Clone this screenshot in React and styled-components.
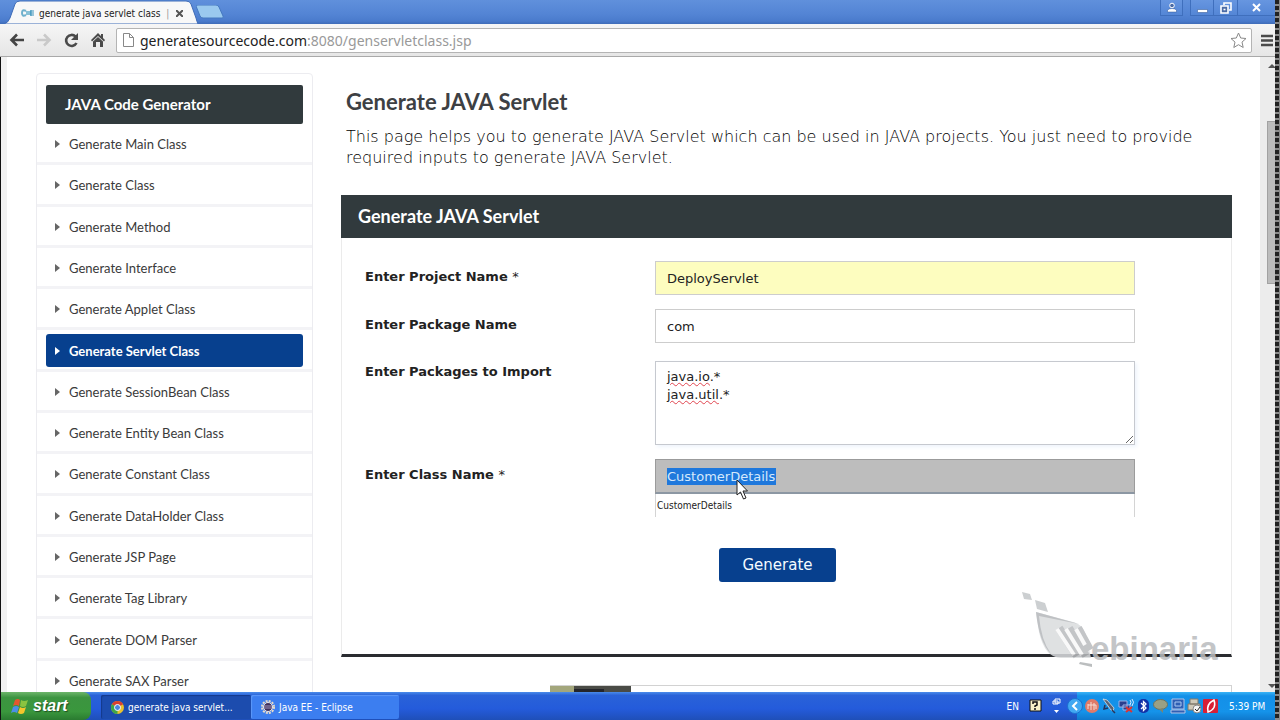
import React from "react";
import styled, { createGlobalStyle } from "styled-components";

const verdana = `"DejaVu Sans", sans-serif`;
const lato = `Lato, sans-serif`;
const tahoma = `"DejaVu Sans Condensed", "DejaVu Sans", sans-serif`;

const Global = createGlobalStyle`
  * { box-sizing: border-box; }
  body { margin: 0; background: #fff; font-family: ${verdana}; color: #333; }
  button, input, textarea { font-family: inherit; }
  h1, h2, p, ul { margin: 0; padding: 0; }
`;

const Desktop = styled.div`
  display: flex;
  flex-direction: column;
  height: 100vh;
  overflow: hidden;
  position: relative;
`;

const TitleBar = styled.header`
  flex: none;
  display: flex;
  align-items: flex-end;
  height: 24px;
  padding-left: 4px;
  background: linear-gradient(#6090dc, #5384d4 60%, #4a7bcc 88%, #3f6cb8);
`;

const Tab = styled.div`
  position: relative;
  display: flex;
  align-items: center;
  width: 194px;
  height: 24px;
  padding: 2px 0 0 17px;
  font: 10px ${tahoma};
  color: #222;
  > svg.shape { position: absolute; left: 0; top: 0; }
  > *:not(.shape) { position: relative; }
`;

const TabTitle = styled.span`
  flex: 1;
  margin-left: 4px;
  white-space: nowrap;
  i { margin-left: 3px; font-style: normal; color: #999; }
`;

const TabClose = styled.button`
  width: 10px;
  height: 12px;
  margin-right: 12px;
  padding: 0;
  border: 0;
  background: none;
  display: flex;
  align-items: center;
`;

const NewTab = styled.button`
  align-self: flex-start;
  margin: 5px 0 0 -2px;
  padding: 0;
  border: 0;
  background: none;
  height: 14px;
  svg { display: block; }
`;

const WindowButtons = styled.div`
  align-self: flex-start;
  display: flex;
  margin: 0 4px 0 auto;
`;

const WindowButton = styled.button`
  width: ${(p) => p.$w}px;
  height: 16px;
  margin-right: ${(p) => p.$gap || 0}px;
  padding: 0;
  border: 1px solid #3f6fbd;
  border-width: 0 1px 1px ${(p) => (p.$first ? 1 : 0)}px;
  background: linear-gradient(#6796e0, #5486d6);
  display: flex;
  align-items: center;
  justify-content: center;
`;

const Toolbar = styled.nav`
  flex: none;
  display: flex;
  align-items: center;
  height: 33px;
  padding: 0 7px 0 8px;
  background: linear-gradient(#f6f6f6, #e6e6e6);
  border-bottom: 1px solid #a9a9a9;
`;

const ToolButton = styled.button`
  width: 18px;
  height: 20px;
  margin-right: 9px;
  padding: 0;
  border: 0;
  background: none;
  display: grid;
  place-items: center;
`;

const AddressBar = styled.div`
  flex: 1;
  display: flex;
  align-items: center;
  height: 25px;
  padding: 0 4px 0 6px;
  margin-right: 9px;
  border: 1px solid #b4b4b4;
  border-radius: 2px;
  background: #fff;
`;

const Address = styled.span`
  flex: 1;
  margin-left: 6px;
  font: 14px "Noto Sans", sans-serif;
  color: #999;
  b { font-weight: 400; color: #222; }
`;

const Viewport = styled.div`
  flex: 1;
  min-height: 0;
  display: flex;
  border-left: 1px solid #111;
`;

const Page = styled.div`
  flex: 1;
  display: flex;
  align-items: flex-start;
  overflow: hidden;
  padding: 16px 28px 0 29px;
  border-left: 6px solid #f1f1f1;
`;

const Scrollbar = styled.div`
  flex: none;
  display: flex;
  flex-direction: column;
  align-items: flex-end;
  width: 20px;
  padding: 7px 4px 4px 0;
  background: #ececec;
  svg { display: block; }
`;

const Thumb = styled.div`
  width: 9px;
  height: 163px;
  margin: 53px 0 auto;
  background: #bcbcbc;
  border: 1px solid #a2a2a2;
`;

const FilmEdge = styled.div`
  position: absolute;
  top: 0;
  right: 0;
  bottom: 0;
  width: 5px;
  border-right: 1px solid #8a8a8a;
  background: repeating-linear-gradient(#222 0 4px, #8c8c8c 4px 6px);
`;

const Sidebar = styled.aside`
  flex: none;
  width: 277px;
  height: 680px;
  padding-top: 11px;
  border: 1px solid #ececf0;
  border-radius: 4px;
  background: #fff;
`;

const SidebarTitle = styled.h2`
  height: 39px;
  margin: 0 9px;
  padding-left: 19px;
  border-radius: 2px;
  background: #313a3d;
  color: #fff;
  font: 700 15px/39px ${lato};
`;

const Menu = styled.ul`
  list-style: none;
  display: grid;
  grid-auto-rows: 1fr;
  height: 578px;
`;

const MenuItem = styled.li`
  display: flex;
  align-items: center;
  padding: 0 9px;
  border-bottom: 3px solid #f3f3f6;
`;

const MenuLink = styled.a`
  flex: 1;
  display: flex;
  align-items: center;
  gap: 9px;
  height: 33px;
  padding-left: 9px;
  margin-top: 2px;
  border-radius: 3px;
  background: ${(p) => (p.$active ? "#07408e" : "transparent")};
  color: ${(p) => (p.$active ? "#fff" : "#3a3a3a")};
  font: ${(p) => (p.$active ? 700 : 400)} 13px ${lato};
  text-decoration: none;
`;

const Main = styled.main`
  flex: 1;
  min-width: 0;
  margin-left: 28px;
`;

const Intro = styled.section`
  padding: 17px 5px 0;
  height: 122px;
`;

const PageTitle = styled.h1`
  font: 700 22px/24px ${lato};
  color: #3d4043;
  margin-bottom: 12px;
`;

const Lead = styled.p`
  font-size: 16px;
  font-weight: 200;
  line-height: 21px;
  color: #000;
`;

const Panel = styled.form`
  height: 462px;
  border: 1px solid #ebebeb;
  border-top: 0;
  border-bottom: 3px solid #2a2c30;
`;

const PanelTitle = styled.h2`
  height: 43px;
  margin: 0 -1px 23px;
  padding-left: 17px;
  background: #313a3d;
  color: #fff;
  font: 700 18px/43px ${lato};
`;

const Field = styled.div`
  display: grid;
  grid-template-columns: 290px 1fr;
  align-items: start;
  margin: 0 96px ${(p) => p.$gap || 0}px 23px;
`;

const Label = styled.label`
  padding-top: ${(p) => (p.$raised ? 2 : 7)}px;
  font-size: 13px;
  line-height: 17px;
  font-weight: 700;
  color: #222;
  span { font-weight: 400; }
`;

const TextInput = styled.input`
  width: 100%;
  height: 34px;
  padding: 0 11px;
  border: 1px solid #cdcdcd;
  border-radius: 0;
  background: ${(p) => p.$bg || "#fff"};
  color: #222;
  font-size: 13px;
  outline: 0;
`;

const TextArea = styled.textarea`
  display: block;
  width: 100%;
  height: 84px;
  padding: 6px 11px;
  border: 1px solid #c6c9cf;
  border-radius: 0;
  box-shadow: 2px 2px 4px #eef4fc;
  color: #222;
  font-size: 13px;
  line-height: 18px;
  outline: 0;
  resize: vertical;
`;

const Spelling = styled.div`
  position: absolute;
  left: 12px;
  top: 7px;
  font-size: 13px;
  line-height: 18px;
  color: transparent;
  pointer-events: none;
  span { text-decoration: underline wavy #e0454f 1px; }
`;

const Relative = styled.div`
  position: relative;
`;

const SelectedInput = styled.div`
  display: flex;
  align-items: center;
  height: 35px;
  padding-left: 11px;
  border: 1px solid #9b9b9b;
  border-bottom: 2px solid #8c97a3;
  background: #bdbdbd;
  input {
    width: 109px;
    height: 17px;
    padding: 0;
    border: 0;
    background: #1f78dc;
    color: #d5e8fb;
    font-size: 13px;
    outline: 0;
  }
`;

const Suggestion = styled.div`
  height: 23px;
  padding-left: 1px;
  border: 1px solid #d4d4d4;
  border-width: 0 1px;
  font: 10px/23px ${tahoma};
  color: #222;
`;

const Cursor = styled.svg`
  position: absolute;
  left: 81px;
  top: 20px;
`;

const Submit = styled.button`
  display: block;
  width: 117px;
  height: 34px;
  margin: 31px auto 0 377px;
  border: 0;
  border-radius: 3px;
  background: #07408e;
  color: #f4fbff;
  font-size: 15px;
  font-weight: 400;
`;

const NextPanel = styled.section`
  height: 80px;
  margin: 28px 0 0 209px;
  border: 1px solid #d2d2d2;
  border-left: 0;
  svg { display: block; }
`;

const Watermark = styled.svg`
  position: absolute;
  right: 55px;
  bottom: 52px;
`;

const Taskbar = styled.footer`
  flex: none;
  display: flex;
  align-items: stretch;
  height: 28px;
  border-left: 1px solid #111;
  background: linear-gradient(#4a8cea, #2a62d8 12%, #245bdb 60%, #1f4fb8);
  font: 10px ${tahoma};
  color: #fff;
`;

const StartButton = styled.button`
  display: flex;
  align-items: center;
  gap: 4px;
  width: 90px;
  padding: 0 0 0 10px;
  border: 0;
  border-radius: 0 8px 8px 0;
  background: linear-gradient(#6db56a, #3c9440 20%, #3a973d 70%, #2a7a30);
  color: #fff;
  font: italic 700 16px "Liberation Sans", sans-serif;
  text-shadow: 1px 1px 1px #1d4d20;
`;

const Task = styled.button`
  display: flex;
  align-items: center;
  gap: 4px;
  width: ${(p) => p.$w}px;
  margin: 3px 0 1px ${(p) => p.$gap || 0}px;
  padding: 0 0 0 10px;
  border: 0;
  border-radius: 2px;
  background: ${(p) => (p.$active ? "#1c4cae" : "#3c7ef0")};
  box-shadow: inset 1px 1px 1px ${(p) => (p.$active ? "#153a8c" : "#5c98f8")};
  color: #fff;
  font: inherit;
  white-space: nowrap;
`;

const Language = styled.div`
  display: flex;
  align-items: center;
  gap: 10px;
  margin-left: auto;
  padding-right: 16px;
`;

const Tray = styled.div`
  display: flex;
  align-items: center;
  gap: 1px;
  width: 203px;
  background: linear-gradient(#3ab4f6, #1390e8 14%, #1593ea 70%, #0f78cc);
  time { margin-left: 10px; white-space: nowrap; }
`;

const TrayToggle = styled.button`
  margin-left: -10px;
  padding: 0;
  border: 0;
  background: none;
  svg { display: block; }
`;

const items = [
  "Generate Main Class", "Generate Class", "Generate Method", "Generate Interface",
  "Generate Applet Class", "Generate Servlet Class", "Generate SessionBean Class",
  "Generate Entity Bean Class", "Generate Constant Class", "Generate DataHolder Class",
  "Generate JSP Page", "Generate Tag Library", "Generate DOM Parser", "Generate SAX Parser",
];

const Chevron = ({ color }) => (
  <svg width="5" height="8" viewBox="0 0 5 8"><path d="M0 0l5 4-5 4z" fill={color} /></svg>
);

function Browser() {
  return (
    <>
      <TitleBar>
        <Tab>
          <svg className="shape" width="194" height="24"><path d="M0 24Q4 23 6 18L11 4Q12 1 16 1H182Q186 1 187 4L192 18Q193 22 194 24z" fill="#f8f8f8" stroke="#3f6cb8" strokeWidth="1" /></svg>
          <svg width="14" height="8" viewBox="0 0 14 8" fill="none" strokeWidth="2"><path d="M5 2Q1 0 1 4T5 6" stroke="#6fb0cc" /><path d="M5 4h5" stroke="#88c0d6" strokeWidth="4" /><path d="M10 1v6M9 2h4M9 4h4M9 6h4" stroke="#3b93bb" strokeWidth="1" /></svg>
          <TabTitle>generate java servlet class <i>|</i></TabTitle>
          <TabClose aria-label="Close tab"><svg width="7" height="7"><path d="M0 0l7 7M7 0L0 7" stroke="#555" strokeWidth="2" /></svg></TabClose>
        </Tab>
        <NewTab aria-label="New tab"><svg width="28" height="14"><path d="M0 1Q0 0 2 0H20Q22 0 23 2L27 11Q28 13 26 13H7Q5 13 4 11z" fill="#9ac9ef" stroke="#4478c0" /></svg></NewTab>
        <WindowButtons>
          <WindowButton $w={23} $gap={7} $first aria-label="Profile"><svg width="10" height="11"><circle cx="5" cy="3.500" r="2.300" fill="#4a6ba6" stroke="#fff" /><path d="M.5 10V8Q2 6.500 5 6.500T9.500 8V10z" fill="#fff" stroke="#2f5596" strokeWidth=".5" /></svg></WindowButton>
          <WindowButton $w={24} $first aria-label="Minimize"><svg width="11" height="11"><path d="M.5 7.500h10v3H.5z" fill="#fff" stroke="#3a5f9e" strokeWidth=".6" /></svg></WindowButton>
          <WindowButton $w={24} aria-label="Restore"><svg width="12" height="12" fill="none" stroke="#fff" strokeWidth="1.600"><path d="M4 3V1h7v7H9" /><path d="M1 4h7v7H1z" fill="#4a6ba6" /><path d="M3.500 7.500h2" /></svg></WindowButton>
          <WindowButton $w={38} aria-label="Close"><svg width="9" height="9"><path d="M1 1l7 7M8 1L1 8" stroke="#fff" strokeWidth="2" /></svg></WindowButton>
        </WindowButtons>
      </TitleBar>
      <Toolbar>
        <ToolButton aria-label="Back"><svg width="16" height="14" fill="none" stroke="#444" strokeWidth="2.6"><path d="M15 7H3M8 1.5L2.500 7L8 12.500" /></svg></ToolButton>
        <ToolButton aria-label="Forward"><svg width="16" height="14" fill="none" stroke="#c9c9c9" strokeWidth="2.6"><path d="M1 7H13M8 1.500L13.500 7L8 12.500" /></svg></ToolButton>
        <ToolButton aria-label="Reload"><svg width="15" height="15"><path d="M12.500 10A5.500 5.500 0 1 1 11.500 3.500" fill="none" stroke="#4a4a4a" strokeWidth="2.600" /><path d="M14 0v7H7z" fill="#4a4a4a" /></svg></ToolButton>
        <ToolButton aria-label="Home"><svg width="14" height="14" fill="#4a4a4a"><path d="M7 0L0 7l1 1.500L7 3l6 5.500L14 7l-2-2V1h-2v2z" /><path d="M2 8.500L7 4l5 4.500V14H9V9H5v5H2z" /></svg></ToolButton>
        <AddressBar>
          <svg width="11" height="14" fill="#fff" stroke="#888"><path d="M.5.5h6l4 4v9H.5zM6.500.5v4h4" /></svg>
          <Address><b>generatesourcecode.com</b>:8080/genservletclass.jsp</Address>
          <svg width="17" height="17" viewBox="0 0 17 17"><path d="M8.500 1l2.200 5 5.300.5-4 3.600 1.200 5.400-4.700-2.800-4.700 2.800L5 10.100 1 6.500 6.300 6z" fill="#fff" stroke="#888" /></svg>
        </AddressBar>
        <svg width="12" height="13"><path d="M0 2h12M0 6.500h12M0 11h12" stroke="#4a4a4a" strokeWidth="2.500" /></svg>
      </Toolbar>
    </>
  );
}

function ServletForm() {
  return (
    <Panel onSubmit={(e) => e.preventDefault()}>
      <PanelTitle>Generate JAVA Servlet</PanelTitle>
      <Field $gap={14}>
        <Label htmlFor="project">Enter Project Name <span>*</span></Label>
        <TextInput id="project" $bg="#fdfdbf" defaultValue="DeployServlet" />
      </Field>
      <Field $gap={18}>
        <Label htmlFor="package">Enter Package Name</Label>
        <TextInput id="package" defaultValue="com" />
      </Field>
      <Field $gap={14}>
        <Label htmlFor="imports" $raised>Enter Packages to Import</Label>
        <Relative>
          <TextArea id="imports" spellCheck={false} defaultValue={"java.io.*\njava.util.*"} />
          <Spelling aria-hidden="true"><span>java.io</span><br /><span>java.util</span></Spelling>
        </Relative>
      </Field>
      <Field>
        <Label htmlFor="classname">Enter Class Name <span>*</span></Label>
        <Relative>
          <SelectedInput><input id="classname" defaultValue="CustomerDetails" /></SelectedInput>
          <Suggestion>CustomerDetails</Suggestion>
          <Cursor width="12" height="21" viewBox="0 0 12 21"><path d="M1 1V16L4.500 13L7.500 20L10 19L7 12H11.500z" fill="#fff" stroke="#222" /></Cursor>
        </Relative>
      </Field>
      <Submit type="submit">Generate</Submit>
    </Panel>
  );
}

function WebinariaMark() {
  return (
    <Watermark width="204" height="76" viewBox="0 0 204 76" opacity=".85">
      <g fill="#c4c7c9">
        <path d="M1 0l8 2 2 6-8-1zM14 8l10 3 3 9-11-3z" />
        <path d="M15 20L52 30Q64 33 66 48L70 66H40Q24 66 18 40z" fill="#dadcde" />
        <path d="M15 20L58 32L18 24Q20 48 30 62Q18 50 15 20z" fill="#b4b7ba" />
      </g>
      <g fill="none" stroke="#b9bbbe" strokeWidth="8"><path d="M38 36l18 28M48 36l17 28M57 36l12 22" /></g>
      <g fill="none" stroke="#f8f8f8" strokeWidth="4"><path d="M36 37l17 26M45 37l16 26M55 37l9 16" /></g>
      <path d="M59 70l12 2v3l-13-3z" fill="#b0b3b5" />
      <text x="70" y="68" fill="#b9bbbe" fontFamily="'Liberation Sans Narrow', 'Liberation Sans', sans-serif" fontWeight="700" fontSize="33">ebinaria</text>
    </Watermark>
  );
}

function WindowsTaskbar() {
  return (
    <Taskbar>
      <StartButton>
        <svg width="18" height="17" viewBox="0 0 18 17"><path d="M4 2Q7 0 9 2L8 8Q5 6 2 8z" fill="#e4572e" /><path d="M10 2Q13 4 17 2L15 8Q12 10 9 8z" fill="#8ac440" /><path d="M2 9Q5 7 8 9L6 15Q3 13 0 15z" fill="#4b8fe8" /><path d="M9 9Q12 11 15 9L13 15Q10 17 7 15z" fill="#f5c52c" /></svg>
        start
      </StartButton>
      <Task $w={150} $gap={10} $active>
        <svg width="13" height="13" viewBox="0 0 13 13"><circle cx="6.500" cy="6.500" r="6.500" fill="#e8c22e" /><path d="M6.500 6.500L.9 3.200A6.500 6.500 0 0 1 12.100 3.200z" fill="#d8412f" /><path d="M6.500 6.500L.9 3.200A6.500 6.500 0 0 0 6.500 13z" fill="#3fa648" /><circle cx="6.500" cy="6.500" r="3" fill="#4a86e0" stroke="#fff" /></svg>
        generate java servlet...
      </Task>
      <Task $w={148}>
        <svg width="14" height="14"><circle cx="7" cy="7" r="6" fill="none" stroke="#e8dcc8" strokeWidth="2" strokeDasharray="2 1.140" /><circle cx="7" cy="7" r="4.500" fill="#40305c" stroke="#eee" /><path d="M3 6h8M3 8h8" stroke="#c8c0e0" strokeWidth=".7" /></svg>
        Java EE - Eclipse
      </Task>
      <Language>
        <span>EN</span>
        <svg width="13" height="14"><path d="M1 1h11v11H1z" fill="#f8f2c8" stroke="#111" /><path d="M4 5V3h4v3L6 7v1M6 9v2" fill="none" stroke="#111" strokeWidth="1.500" /></svg>
        <svg width="9" height="17"><path d="M3 1h5v4H3zM1 3h5v3H1z" fill="#2a62d8" stroke="#fff" /><path d="M2 12h5l-2.500 3z" fill="#fff" /></svg>
      </Language>
      <Tray>
        <TrayToggle aria-label="Show hidden icons"><svg width="16" height="18"><circle cx="8" cy="9" r="7.500" fill="#41a8f2" stroke="#1c6fd0" /><path d="M10 5L6 9l4 4" fill="none" stroke="#fff" strokeWidth="2" /></svg></TrayToggle>
        <svg width="16" height="16"><circle cx="8" cy="8" r="7" fill="#e07a68" /><path d="M4 6v5M7 4v8M10 5v7M12 7v4M4 7h8" stroke="#f7ddd4" /></svg>
        <svg width="16" height="16"><path d="M2 1l4 1 7 8-1 3-2-1z" fill="#5b6272" stroke="#dcdfe4" strokeWidth=".8" /><path d="M4 7l-1 4 4-1M11 12l3 3" stroke="#26345a" fill="none" strokeWidth="1.500" /></svg>
        <svg width="17" height="16"><path d="M1 3h8v6H1zM5 7h7v5H5z" fill="#2b3f8e" stroke="#9fb2e6" /><path d="M12 2q2 2 0 5M14 1q3 3 0 7" stroke="#dcecff" fill="none" /><path d="M8 9l6 5M14 9l-6 5" stroke="#d33" strokeWidth="2" /></svg>
        <svg width="15" height="16"><rect x="2" y="1" width="11" height="14" rx="5" fill="#1232a8" /><path d="M5 5l5 5-2.500 2.500v-9L10 6l-5 5" fill="none" stroke="#fff" strokeWidth="1.300" /></svg>
        <svg width="17" height="16"><ellipse cx="8.500" cy="6.500" rx="7" ry="5" fill="#9aa084" stroke="#6d7460" /><path d="M7 11l4 4 0-5z" fill="#7d8470" /></svg>
        <svg width="16" height="16"><path d="M2 1h12v10H2zM1 12h14v3H1z" fill="#2f5fb4" stroke="#b0c4e8" /><path d="M5 4h6v4H5z" fill="none" stroke="#a9c8f2" /></svg>
        <svg width="15" height="16"><path d="M3 1h8v5H3zM1 6h12v6H1z" fill="#cfc9b8" stroke="#80796a" /><circle cx="10" cy="11" r="4" fill="#f4f4f4" stroke="#888" /><path d="M8 11l2 2 3-4" fill="none" stroke="#222" /></svg>
        <svg width="15" height="16"><rect x="0" y="1" width="15" height="14" rx="1" fill="#d81f35" /><path d="M11 2Q3 6 5 14Q14 11 11 2z" fill="none" stroke="#fff" strokeWidth="1.500" /></svg>
        <time>5:39 PM</time>
      </Tray>
    </Taskbar>
  );
}

export default function App() {
  return (
    <Desktop>
      <Global />
      <Browser />
      <Viewport>
        <Page>
          <Sidebar>
            <SidebarTitle>JAVA Code Generator</SidebarTitle>
            <Menu>
              {items.map((name, i) => (
                <MenuItem key={name}>
                  <MenuLink href="#" $active={i === 5}>
                    <Chevron color={i === 5 ? "#fff" : "#666"} />
                    {name}
                  </MenuLink>
                </MenuItem>
              ))}
            </Menu>
          </Sidebar>
          <Main>
            <Intro>
              <PageTitle>Generate JAVA Servlet</PageTitle>
              <Lead>This page helps you to generate JAVA Servlet which can be used in JAVA projects. You just need to provide required inputs to generate JAVA Servlet.</Lead>
            </Intro>
            <ServletForm />
            <NextPanel>
              <svg width="81" height="8"><path d="M0 0h81v8H0z" fill="#4a4b46" /><path d="M0 0h24v8H0z" fill="#a3a67c" /><path d="M24 3h30v5H24z" fill="#24252a" /></svg>
            </NextPanel>
          </Main>
        </Page>
        <Scrollbar>
          <svg width="8" height="4"><path d="M0 4l4-4 4 4z" fill="#555" /></svg>
          <Thumb />
          <svg width="8" height="4"><path d="M0 0l4 4 4-4z" fill="#555" /></svg>
        </Scrollbar>
      </Viewport>
      <WindowsTaskbar />
      <WebinariaMark />
      <FilmEdge />
    </Desktop>
  );
}
